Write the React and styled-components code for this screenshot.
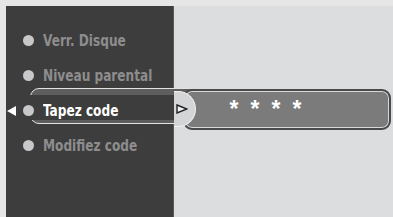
import styled, { createGlobalStyle } from 'styled-components';

const GlobalStyle = createGlobalStyle`
  html, body {
    margin: 0;
    padding: 0;
    background: #e6e6e7;
  }
`;

const Screen = styled.div`
  position: relative;
  width: 393px;
  height: 217px;
  box-sizing: border-box;
  padding: 6px 0 0 6px;
  display: flex;
  background: #e6e6e7;
  overflow: hidden;
  font-family: 'DejaVu Sans Condensed', 'Liberation Sans', sans-serif;
`;

const LeftPanel = styled.div`
  width: 168px;
  box-sizing: border-box;
  background: #3d3d3d;
  border-right: 1px solid #595959;
  padding-top: 17px;
`;

const RightPanel = styled.div`
  flex: 1;
  background: #dcdddf;
`;

const Menu = styled.ul`
  list-style: none;
  margin: 0;
  padding: 0;
  position: relative;
  z-index: 4;
`;

const Row = styled.li`
  height: 35px;
  display: flex;
  align-items: center;
  padding-left: 1px;
`;

const Arrow = styled.span`
  width: 0;
  height: 0;
  margin-right: 7px;
  border-top: 5px solid transparent;
  border-bottom: 5px solid transparent;
  border-right: 9px solid ${(p) => (p.$show ? '#ffffff' : 'transparent')};
`;

const Bullet = styled.span`
  width: 11px;
  height: 11px;
  border-radius: 50%;
  background: #c8c8cb;
  margin-right: 9px;
`;

const Label = styled.span`
  display: inline-block;
  font-size: 15.5px;
  font-weight: bold;
  transform: scaleX(0.87);
  transform-origin: left center;
  color: ${(p) => (p.$active ? '#ffffff' : '#8d8d8e')};
  white-space: nowrap;
`;

const Pill = styled.div`
  position: absolute;
  left: 30px;
  top: 88px;
  width: 170px;
  height: 36px;
  box-sizing: border-box;
  border: 1px solid #e2e2e2;
  border-radius: 9px;
  background: #5e5e5e;
  z-index: 1;

  &::before {
    content: '';
    position: absolute;
    left: -2px;
    right: 0;
    top: 6px;
    height: 25px;
    background: #3d3d3d;
  }
`;

const CodeBox = styled.div`
  position: absolute;
  left: 183px;
  top: 89px;
  width: 208px;
  height: 41px;
  box-sizing: border-box;
  border: 2px solid #4a4a4a;
  border-radius: 9px;
  background: #7b7b7b;
  box-shadow: inset 0 0 0 1px #d8d8d8;
  display: flex;
  gap: 9px;
  padding: 7px 0 0 43px;
  z-index: 2;
`;

const Star = styled.span`
  width: 12px;
  text-align: center;
  font-family: 'Liberation Sans', sans-serif;
  font-weight: bold;
  font-size: 23px;
  line-height: 22px;
  color: #ffffff;
`;

const Cap = styled.div`
  position: absolute;
  left: 174px;
  top: 91px;
  width: 22px;
  height: 36px;
  box-sizing: border-box;
  background: #d4d5d6;
  border: 1px solid #f0f0f0;
  border-left: none;
  border-radius: 0 18px 18px 0;
  display: flex;
  align-items: center;
  padding-left: 2px;
  z-index: 3;
`;

const items = ['Verr. Disque', 'Niveau parental', 'Tapez code', 'Modifiez code'];
const selected = 2;

export default function App() {
  return (
    <>
      <GlobalStyle />
      <Screen>
        <LeftPanel>
          <Menu>
            {items.map((item, i) => (
              <Row key={item}>
                <Arrow $show={i === selected} />
                <Bullet />
                <Label $active={i === selected}>{item}</Label>
              </Row>
            ))}
          </Menu>
        </LeftPanel>
        <RightPanel />
        <Pill />
        <CodeBox>
          {[0, 1, 2, 3].map((n) => (
            <Star key={n}>*</Star>
          ))}
        </CodeBox>
        <Cap>
          <svg width="12" height="10" viewBox="0 0 12 10">
            <polygon points="1,1 11,5 1,9" fill="#f2f2f2" stroke="#1e1e1e" strokeWidth="1.4" strokeLinejoin="miter" />
          </svg>
        </Cap>
      </Screen>
    </>
  );
}
